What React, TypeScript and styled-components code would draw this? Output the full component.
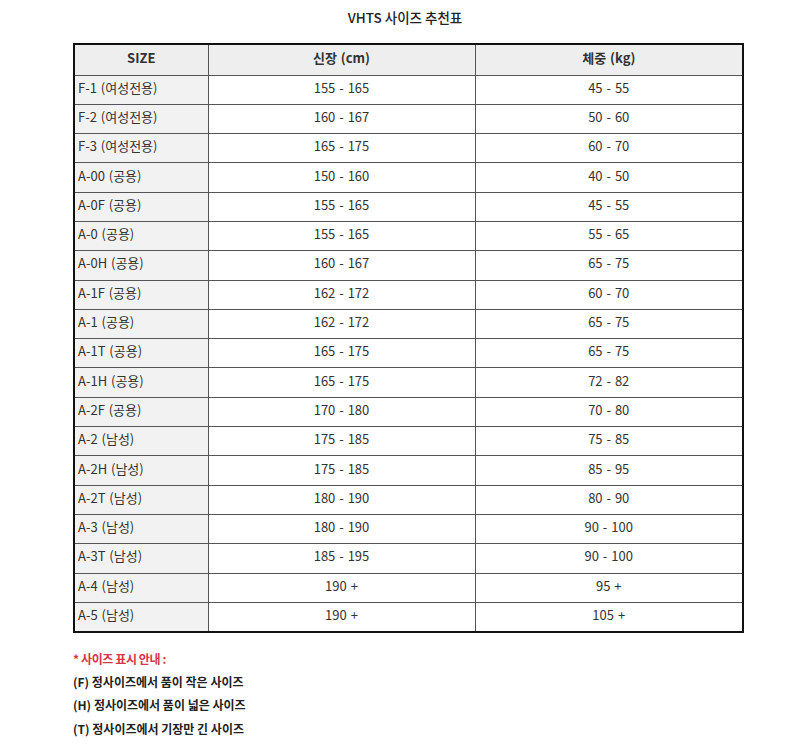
import React from 'react'
import styled, { createGlobalStyle } from 'styled-components'

const rows: [string, string, string][] = [
  ['F-1 (여성전용)', '155 - 165', '45 - 55'],
  ['F-2 (여성전용)', '160 - 167', '50 - 60'],
  ['F-3 (여성전용)', '165 - 175', '60 - 70'],
  ['A-00 (공용)', '150 - 160', '40 - 50'],
  ['A-0F (공용)', '155 - 165', '45 - 55'],
  ['A-0 (공용)', '155 - 165', '55 - 65'],
  ['A-0H (공용)', '160 - 167', '65 - 75'],
  ['A-1F (공용)', '162 - 172', '60 - 70'],
  ['A-1 (공용)', '162 - 172', '65 - 75'],
  ['A-1T (공용)', '165 - 175', '65 - 75'],
  ['A-1H (공용)', '165 - 175', '72 - 82'],
  ['A-2F (공용)', '170 - 180', '70 - 80'],
  ['A-2 (남성)', '175 - 185', '75 - 85'],
  ['A-2H (남성)', '175 - 185', '85 - 95'],
  ['A-2T (남성)', '180 - 190', '80 - 90'],
  ['A-3 (남성)', '180 - 190', '90 - 100'],
  ['A-3T (남성)', '185 - 195', '90 - 100'],
  ['A-4 (남성)', '190 +', '95 +'],
  ['A-5 (남성)', '190 +', '105 +'],
]

const notes = [
  '(F) 정사이즈에서 품이 작은 사이즈',
  '(H) 정사이즈에서 품이 넓은 사이즈',
  '(T) 정사이즈에서 기장만 긴 사이즈',
]

export default function App() {
  return (
    <Page>
      <Global />
      <Title>VHTS 사이즈 추천표</Title>
      <Table>
        <colgroup>
          <col style={{ width: 134 }} />
          <col style={{ width: 267 }} />
          <col style={{ width: 268 }} />
        </colgroup>
        <thead>
          <HeadRow>
            <HeadCell>SIZE</HeadCell>
            <HeadCell>신장 (cm)</HeadCell>
            <HeadCell>체중 (kg)</HeadCell>
          </HeadRow>
        </thead>
        <tbody>
          {rows.map((r, i) => (
            <BodyRow key={i}>
              <SizeCell>{r[0]}</SizeCell>
              <ValueCell>{r[1]}</ValueCell>
              <ValueCell>{r[2]}</ValueCell>
            </BodyRow>
          ))}
        </tbody>
      </Table>
      <Notes>
        <NoteTitle>* 사이즈 표시 안내 :</NoteTitle>
        {notes.map((n) => (
          <NoteLine key={n}>{n}</NoteLine>
        ))}
      </Notes>
    </Page>
  )
}

const Global = createGlobalStyle`
body{
margin:0;
background:#fff;
font-family:"Noto Sans CJK KR","Noto Sans",sans-serif;
color:#333;
}
`
const Page = styled.div`
width:808px;
height:750px;
background:#fff;
display:flex;
flex-direction:column;
overflow:hidden;
`
const Title = styled.div`
height:43px;
display:flex;
align-items:center;
justify-content:center;
padding:0 0 10px 2px;
box-sizing:border-box;
font-size:13.5px;
font-weight:500;
color:#222;
`
const Table = styled.table`
margin-left:73px;
width:669px;
border-collapse:collapse;
table-layout:fixed;
border:2px solid #111;
font-size:13px;
line-height:16px;
word-spacing:1px;
`
const HeadRow = styled.tr`
height:31px;
`
const HeadCell = styled.th`
background:#eeeeee;
border:1.5px solid #555;
font-weight:700;
color:#333;
text-align:center;
padding:0 0 4px;
`
const BodyRow = styled.tr`
height:29.3px;
`
const SizeCell = styled.td`
background:#f2f2f2;
border:1.5px solid #555;
padding:0 0 4px 3px;
text-align:left;
color:#333;
`
const ValueCell = styled.td`
border:1.5px solid #555;
padding:0 0 4px;
text-align:center;
color:#333;
`
const Notes = styled.div`
margin:14px 0 0 73px;
display:flex;
flex-direction:column;
font-size:12px;
font-weight:700;
`
const NoteTitle = styled.div`
line-height:23.3px;
color:#d8334a;
letter-spacing:-0.4px;
`
const NoteLine = styled.div`
line-height:23.3px;
color:#222;
`
